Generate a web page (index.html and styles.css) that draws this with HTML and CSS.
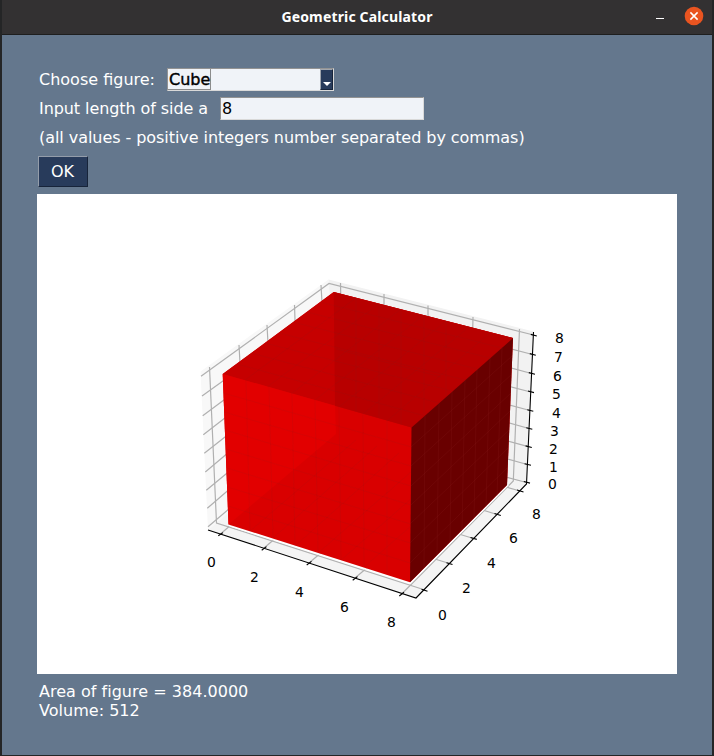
FILE: index.html
```html
<!DOCTYPE html>
<html lang="en">
<head>
<meta charset="utf-8">
<title>Geometric Calculator</title>
<link rel="stylesheet" href="styles.css">
</head>
<body>
<div class="window">
  <header class="titlebar">
    <h1 class="title">Geometric Calculator</h1>
    <div class="controls">
      <svg class="minimize" width="8" height="4" viewBox="0 0 8 4"><path d="M0 .5H8" stroke="#fff"/></svg>
      <svg class="close" width="20" height="20" viewBox="0 0 20 20"><circle cx="10" cy="10" r="9.3" fill="#e95420"/><path d="M6.4 6.4L13.6 13.6M13.6 6.4L6.4 13.6" stroke="#fff" stroke-width="1.5"/></svg>
    </div>
  </header>
  <main class="content">
    <div class="row">
      <span class="label-figure">Choose figure:</span>
      <div class="combo"><span class="selected">Cube</span><span class="arrow"><svg width="8" height="4" viewBox="0 0 8 4"><path d="M0 0H8L4 4Z" fill="#fff"/></svg></span></div>
    </div>
    <div class="row">
      <span class="label-side">Input length of side a</span>
      <div class="field">8</div>
    </div>
    <div class="row hint">(all values - positive integers number separated by commas)</div>
    <button class="ok">OK</button>
    <svg class="plot" width="640" height="480" viewBox="37 194 640 480">
      <path fill="#f8f8f8" d="M200.5 371.5L328.5 279.5L337 421L208 530Z"/>
      <path fill="#f2f2f2" d="M328.5 279.5L533.5 331.5L526.5 484L337 421Z"/>
      <path fill="#f4f4f4" d="M208 530L337 421L526.5 484L416 598Z"/>
      <g class="grid">
        <path d="M209.5 367L216.5 523L425 590M239 345L242 400M267 325L270 380M294.5 305L296 350M321 285L323 320"/>
        <path d="M201 376.3L329 283.5L533.5 335M202 396L232 374.5M202.7 415.7L232 394M203.3 434.7L232 412.5M204.3 453.3L232 431.5M205.3 472L232 449.5M206.3 490.3L232 469M207.3 508.3L232 487M208 526.7L236 503"/>
        <path d="M340.5 283L341 310M384 294V320M428 305.5V330M473 317L472.5 340M519.5 329L513.3 481L401.7 594"/>
        <path d="M532.5 354.5L500 346M531.5 373.5L500 365M530.7 392L500 384M530 410.5L500 402.5M529 428.5L500 420.5M528.3 446.7L500 439M527.3 464.5L500 457M526.5 482.5L495 474"/>
        <path d="M449.5 563.5L425 556M473.5 538.5L449 531M497 514.5L473 507M520 491L496 484"/>
        <path d="M220.5 534L240 517M264 548L284 531M309 563L329 546M355 578L375 561"/>
      </g>
      <path fill="#fff" d="M228.5 524.5L410 582.3L507 485L509 485L410.5 584.2L229 526.3Z"/>
      <path fill="#d90000" d="M222.7 374L333.7 292L513 338L507 485L410 582.3L228.5 524.5Z"/>
      <path fill="#c60000" d="M222.7 374L333.7 292L513 338L411.5 427.5Z"/>
      <path fill="#b80000" d="M333.7 292L513 338L411.5 427.5L335 405.8Z"/>
      <path fill="#e20000" d="M222.7 374L335 405.8L336 434L228.5 524.5Z"/>
      <path fill="#690000" d="M411.5 427.5L513 338L507 485L410 582.3Z"/>
      <g class="mesh">
        <path d="M246 380.6L250 531M269 387L273 538M292 393.5L295 546M315 400L318 553M339 407L341 560M363 414L364 567M387 420.5L387 575"/>
        <path d="M223.4 393L411.3 447M224 412L411 466M225 430L411 486M226 449L410.7 505M227 468L410.5 524M227.5 487L410.3 543M228 506L410 563"/>
        <path d="M237 364L425 416M251 353L439 403M265 343L452 391M279 333L465 380M293 322L477 369M307 312L490 358M320 302L502 348M245 380L356 298M267 387L379 304M291 394L401 309M315 400L424 315M339 407L446 321M363 414L469 327M387 421L491 332"/>
        <path d="M250 531L356 440M273 538L377 446M295 546L399 453M318 553L411 472M341 560L411 499M364 567L411 526M336 349L441 377M356 298V412M379 304V418M401 309V425M424 315V414M446 321V396"/>
      </g>
      <g class="mesh side">
        <path d="M425 416L424 568M439 403L437 555M452 391L450 542M465 380L462 530M477 369L474 518M490 358L486 507M502 348L497 496M411 447L512 356M411 466L512 374M411 486L511 393M411 505L510 411M410 524L509 430M410 543L508 448M410 563L508 467"/>
      </g>
      <g class="axes">
        <path d="M208 530L416 598L526.5 484L533.5 332"/>
        <path d="M218.3 535.8L223 532.6M261.7 550.2L266.5 546.6M306.7 565L311.5 561.4M352.7 580.2L357.5 576.6M399.3 596L404 592.3"/>
        <path d="M421.5 589.2L427.5 591.2M446.5 562.7L452.5 564.6M470.5 537.5L476.8 539.4M494.5 513.5L500.8 515.5M517 490L523.5 492"/>
        <path d="M530.8 334.4L536.8 336M529.8 353.6L535.8 355.2M528.8 372.6L535 374.2M528 391L534 392.6M527.3 409.7L533.3 411.3M526.3 427.7L532.3 429.3M525.6 445.9L531.8 447.5M524.6 463.7L531 465.3M523.8 481.5L530 483.1"/>
      </g>
      <g class="ticks">
        <text x="211.3" y="567">0</text><text x="254.3" y="582">2</text><text x="299.3" y="597">4</text><text x="344.3" y="612">6</text><text x="391.5" y="627">8</text>
        <text x="442.3" y="620">0</text><text x="466.3" y="593">2</text><text x="491.3" y="568">4</text><text x="513.5" y="543">6</text><text x="536.5" y="519">8</text>
        <text x="559.5" y="343">8</text><text x="558.3" y="362">7</text><text x="557.5" y="381">6</text><text x="556.3" y="399">5</text><text x="556.3" y="418">4</text><text x="554.5" y="436">3</text><text x="553.3" y="454">2</text><text x="553.3" y="472">1</text><text x="552.3" y="489">0</text>
      </g>
    </svg>
    <div class="result">Area of figure = 384.0000<br>Volume: 512</div>
  </main>
</div>
</body>
</html>
```
FILE: styles.css
```css
* { box-sizing: border-box; }
body {
  margin: 0;
  background: #242526;
  color: #fff;
  font: 16px/19px "DejaVu Sans", sans-serif;
}
.window {
  display: flex;
  flex-direction: column;
  width: 710px;
  height: 755px;
  margin-left: 2px;
  background: #64778d;
}
.titlebar {
  display: grid;
  grid-template-columns: 1fr auto 1fr;
  height: 35px;
  padding-bottom: 2px;
  align-items: center;
  background: #333132;
  border-bottom: 1px solid #1e1e1e;
}
.title {
  grid-column: 2;
  margin: 2px 0 0;
  font: bold 14px/20px "Noto Sans", sans-serif;
  letter-spacing: .15px;
}
.controls {
  display: flex;
  justify-content: flex-end;
  align-items: center;
  gap: 20px;
  padding-right: 8px;
}
.minimize { margin-top: 8px; }
.content {
  display: flex;
  flex-direction: column;
  align-items: flex-start;
  padding: 33px 0 0 35px;
}
.row {
  display: flex;
  align-items: center;
  height: 23px;
  margin-bottom: 6px;
  padding-left: 2px;
  white-space: nowrap;
}
.hint { letter-spacing: -.055px; }
.label-figure { width: 128px; }
.label-side { width: 181px; letter-spacing: -.08px; }
.combo, .field {
  display: flex;
  height: 23px;
  border: 1px solid;
  border-color: #939393 #d9d9d9 #d9d9d9 #939393;
  background: #f0f3f8;
  color: #000;
}
.combo { width: 167px; justify-content: space-between; }
.field { width: 204px; padding-left: 1px; align-items: center; }
.selected {
  height: 21px;
  padding-left: 1px;
  line-height: 21px;
  border-right: 1px solid #8c8c8c;
  border-bottom: 1px solid #8c8c8c;
  -webkit-text-stroke: .4px #000;
}
.arrow {
  display: flex;
  justify-content: center;
  align-items: flex-end;
  width: 13px;
  height: 21px;
  padding-bottom: 3px;
  background: #283b5b;
  border: 1px solid;
  border-color: #a0a5ad #17243a #17243a #a0a5ad;
}
.ok {
  width: 50px;
  height: 31px;
  margin: 1px 0 7px 1px;
  padding: 0 1px 0 0;
  border: 1px solid;
  border-color: #949daa #17243a #17243a #949daa;
  background: #283b5b;
  color: #fff;
  font: inherit;
}
.plot { display: block; background: #fff; }
.grid path { fill: none; stroke: #b0b0b0; stroke-width: 1.2; }
.mesh path { fill: none; stroke: #603030; stroke-width: .7; opacity: .12; }
.side path { stroke: #a03030; opacity: .2; }
.axes path { fill: none; stroke: #000; stroke-width: 1.1; }
.ticks text { font: 13.9px "DejaVu Sans", sans-serif; text-anchor: middle; }
.result { padding: 8px 0 0 2px; letter-spacing: .02px; }
```
